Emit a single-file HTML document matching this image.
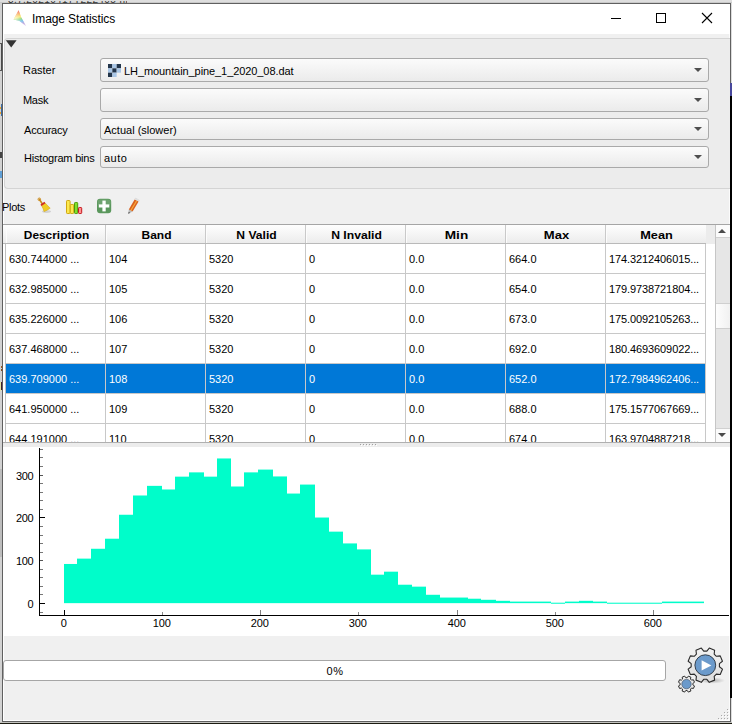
<!DOCTYPE html>
<html><head><meta charset="utf-8"><title>Image Statistics</title>
<style>
html,body{margin:0;padding:0}
body{width:732px;height:724px;overflow:hidden;position:relative;background:#d9d9d9;font-family:"Liberation Sans",Arial,sans-serif;font-size:11px;color:#000}
div,span,svg{position:absolute;box-sizing:border-box}
.a{position:absolute}
#win{left:2px;top:3px;width:729px;height:719px;border:1px solid #606060;background:#f0f0f0}
#tb{left:3px;top:4px;width:727px;height:30px;background:#fff}
#ttl{left:32px;top:12px;font-size:12px;line-height:14px;letter-spacing:-0.1px;white-space:nowrap}
#gb{left:4px;top:38px;width:726px;height:151px;border:1px solid #d4d4d4;border-right:none;border-radius:4px 0 0 4px;background:#ececec}
.lbl{left:23px;line-height:14px;white-space:nowrap;letter-spacing:-0.3px}
.cb{left:100px;width:609px;border:1px solid #a9a9a9;border-radius:3px;background:linear-gradient(#fbfbfb,#ebebeb)}
.cb span{left:3px;white-space:nowrap;line-height:14px;letter-spacing:-0.12px}
.arr{width:0;height:0;border-left:4px solid transparent;border-right:4px solid transparent;border-top:4px solid #4e4e4e}
#tbl{left:3px;top:224px;width:727px;height:219px;border-top:1px solid #a5a5a5;border-bottom:1px solid #b0b0b0;background:#fff;overflow:hidden}
#hdr{left:0;top:0;width:703px;height:19px;background:linear-gradient(#fefefe,#ececec);border-bottom:1px solid #b9b9b9}
#hdr2{left:703px;top:0;width:10px;height:19px;background:#ececec}
.th{top:0;width:100px;height:18px;border-right:1px solid #c9c9c9;box-shadow:inset 1px 0 0 #fcfcfc;margin-left:3px;font-weight:bold;text-align:center}
.th span{left:1px;width:100%;top:3px;line-height:14px;letter-spacing:0;position:absolute;transform:scaleX(1.12);transform-origin:50% 50%}
.tr{left:3px;width:700px;height:30px;border-bottom:1px solid #c8c8c8}
.tr.sel{background:#0078d7;color:#fff}
.td{top:0;width:100px;height:30px;border-right:1px solid #c8c8c8;overflow:hidden}
.td span{left:3px;top:8px;line-height:14px;white-space:nowrap;letter-spacing:0}
#vl{left:2px;top:19px;width:1px;height:200px;background:#c0c0c0}
#sb{left:712px;top:0;width:15px;height:218px;background:#e6e6e6;border-left:1px solid #c6c6c6}
.plot{left:3px;top:447px}
.pl{font-family:"Liberation Sans",Arial,sans-serif;font-size:11px;fill:#000;letter-spacing:-0.35px}
#pb{left:3px;top:660px;width:663px;height:21px;border:1px solid #a6a6a6;border-radius:3px;background:#fff;text-align:center;line-height:21px;letter-spacing:0.5px;text-indent:1px}
</style></head><body>
<!-- background slivers -->
<div style="left:0;top:0;width:732px;height:3px;background:#dedede"></div>
<div style="left:0;top:3px;width:2px;height:719px;background:#d2d2d2"></div>
<div style="left:731px;top:0;width:1px;height:722px;background:#dcdcdc"></div>
<div style="left:0;top:722px;width:732px;height:1px;background:#c4c4c0"></div>
<div style="left:0;top:723px;width:732px;height:1px;background:#1c1c12"></div>

<div style="left:0;top:2px;width:732px;height:1px;background:#c9c9c9"></div>
<div style="left:8px;top:1px;width:119px;height:2px;overflow:hidden"><div style="left:0;top:-7px;font-size:10px;line-height:11px;white-space:nowrap;color:#333;letter-spacing:0.4px">3.7.20210417T222405 nightly</div></div>
<div id="win"></div>
<div id="tb"></div>
<div style="left:3px;top:34px;width:1px;height:687px;background:#fff"></div>
<div style="left:729px;top:34px;width:1px;height:687px;background:#fbfbfb"></div>
<div style="left:3px;top:720px;width:727px;height:1px;background:#fff"></div>
<svg style="left:12px;top:9px" width="18" height="19" viewBox="0 0 18 19">
<defs><linearGradient id="rg" x1="0.55" y1="0" x2="0.75" y2="1">
<stop offset="0" stop-color="#ee2a24"/><stop offset="0.22" stop-color="#f79a1c"/><stop offset="0.38" stop-color="#f6e23a"/><stop offset="0.52" stop-color="#5dc64a"/><stop offset="0.66" stop-color="#3aa6e8"/><stop offset="0.82" stop-color="#a986d2"/><stop offset="1" stop-color="#d9c8ee"/></linearGradient>
<linearGradient id="fd" x1="1" y1="0.3" x2="0" y2="0.7"><stop offset="0" stop-color="#fff" stop-opacity="0"/><stop offset="1" stop-color="#fff" stop-opacity="0.85"/></linearGradient></defs>
<path d="M6.6,1.2 L9.3,8.5 L14.2,17.3 L7.2,11.8 L1.6,10.6 Z" fill="url(#rg)"/>
<path d="M6.6,1.2 L9.3,8.5 L14.2,17.3 L7.2,11.8 L1.6,10.6 Z" fill="url(#fd)"/>
</svg>
<div id="ttl">Image Statistics</div>
<!-- window controls -->
<div style="left:611px;top:18px;width:10px;height:1px;background:#000"></div>
<div style="left:656px;top:13px;width:10px;height:10px;border:1px solid #000"></div>
<svg style="left:701px;top:12px" width="12" height="12" viewBox="0 0 12 12"><path d="M1,1 L11,11 M11,1 L1,11" stroke="#000" stroke-width="1.1" fill="none"/></svg>

<div style="left:730px;top:83px;width:2px;height:13px;background:#47479c"></div>
<div style="left:730px;top:96px;width:2px;height:602px;background:#000"></div>
<div style="left:0;top:469px;width:2px;height:88px;background:#bdbdbd"></div>
<div style="left:1px;top:43px;width:1px;height:28px;background:#4a4a4a"></div>
<div style="left:0;top:43px;width:2px;height:1px;background:#555"></div>
<div style="left:0;top:70px;width:2px;height:1px;background:#555"></div>
<div style="left:0;top:107px;width:2px;height:2px;background:#eea22a"></div>
<div style="left:0;top:112px;width:2px;height:2px;background:#eea22a"></div>
<div style="left:1px;top:104px;width:1px;height:12px;background:#3d6da3"></div>
<div style="left:0;top:152px;width:2px;height:6px;background:#444"></div>
<div style="left:0;top:171px;width:2px;height:7px;background:#5f9fd6"></div>
<div style="left:1px;top:366px;width:1px;height:2px;background:#a05a20"></div><div style="left:1px;top:369px;width:1px;height:2px;background:#8a4a1a"></div><div style="left:0;top:382px;width:1px;height:9px;background:#e6e6a0"></div>
<div style="left:1px;top:382px;width:1px;height:8px;background:#402030"></div>
<div id="gb"></div>
<svg style="left:5px;top:39px" width="13" height="10" viewBox="0 0 13 10"><path d="M0.8,1.2 L11.6,1.2 L6.2,8.6 Z" fill="#333"/></svg>

<div class="lbl" style="top:63px;letter-spacing:0">Raster</div>
<div class="lbl" style="top:93px">Mask</div>
<div class="lbl" style="top:123px;left:24px;letter-spacing:-0.2px">Accuracy</div>
<div class="lbl" style="top:151px;left:24px;letter-spacing:-0.2px">Histogram bins</div>

<div class="cb" style="top:58px;height:24px">
 <svg style="left:7px;top:5px" width="13" height="13" viewBox="0 0 13 13">
 <rect x="0" y="0" width="4.33" height="4.33" fill="#23354b"/><rect x="4.33" y="0" width="4.34" height="4.33" fill="#a9c6e6"/><rect x="8.67" y="0" width="4.33" height="4.33" fill="#23354b"/>
 <rect x="0" y="4.33" width="4.33" height="4.34" fill="#a9c6e6"/><rect x="4.33" y="4.33" width="4.34" height="4.34" fill="#23354b"/><rect x="8.67" y="4.33" width="4.33" height="4.34" fill="#a9c6e6"/>
 <rect x="0" y="8.67" width="4.33" height="4.33" fill="#23354b"/><rect x="4.33" y="8.67" width="4.34" height="4.33" fill="#a9c6e6"/>
 </svg>
 <span style="left:23px;top:5px;letter-spacing:-0.08px">LH_mountain_pine_1_2020_08.dat</span>
 <div class="arr" style="left:593px;top:9px"></div>
</div>
<div class="cb" style="top:88px;height:24px"><div class="arr" style="left:593px;top:9px"></div></div>
<div class="cb" style="top:118px;height:22px"><span style="top:4px;letter-spacing:0">Actual (slower)</span><div class="arr" style="left:593px;top:8px"></div></div>
<div class="cb" style="top:146px;height:22px"><span style="top:4px;letter-spacing:0.5px">auto</span><div class="arr" style="left:593px;top:8px"></div></div>

<!-- toolbar -->
<div class="a" style="left:2px;top:200px;line-height:14px;letter-spacing:-0.3px">Plots</div>
<!-- broom -->
<svg style="left:36px;top:196px" width="18" height="18" viewBox="0 0 18 18">
<ellipse cx="10.5" cy="15.6" rx="4.5" ry="1.3" fill="#000" opacity="0.13"/>
<path d="M3.4,3.4 L6.6,8.2" stroke="#c98a1c" stroke-width="1.7" stroke-linecap="round" fill="none"/>
<circle cx="3.3" cy="3.3" r="1.3" fill="none" stroke="#c98a1c" stroke-width="0.9"/>
<path d="M5.2,9.2 L8.8,6.7 L14.2,12.2 C12.6,13.2 10.8,14.6 8.0,15.6 C7.6,13.6 6.6,11.2 5.2,9.2 Z" fill="#f0cc24" stroke="#d3a91b" stroke-width="0.6"/>
<path d="M5.0,9.3 L8.9,6.5" stroke="#cf2a27" stroke-width="1.7" fill="none"/>
</svg>
<!-- bars -->
<svg style="left:65px;top:199px" width="19" height="16" viewBox="65 199 19 16">
<rect x="66.5" y="200.5" width="3.6" height="13" rx="0.8" fill="#fce94f" stroke="#d0a711" stroke-width="1"/>
<rect x="70.3" y="204.5" width="3.4" height="9" rx="0.8" fill="#fce94f" stroke="#d0a711" stroke-width="1"/>
<rect x="74.5" y="202.5" width="3.2" height="11" rx="0.8" fill="#7fe02d" stroke="#4e9a06" stroke-width="1"/>
<rect x="78.5" y="207.5" width="3.2" height="6" rx="0.8" fill="#ff9090" stroke="#c4161c" stroke-width="1"/>
</svg>
<!-- plus -->
<svg style="left:96px;top:198px" width="16" height="16" viewBox="96 198 16 16">
<rect x="97" y="198.8" width="14.2" height="14.4" rx="3" fill="#5a975c"/>
<rect x="97.6" y="199.4" width="13" height="6" rx="2.5" fill="#fff" opacity="0.12"/>
<rect x="98.8" y="204.4" width="10.5" height="3.1" fill="#fff"/>
<rect x="102.4" y="200.6" width="3.3" height="10.8" fill="#fff"/>
</svg>
<!-- pencil -->
<svg style="left:126px;top:197px" width="16" height="18" viewBox="126 197 16 18">
<path d="M134.6,199.4 L138.6,201.6 L132.6,211.6 L128.8,209.4 Z" fill="#d9611e"/>
<path d="M136.2,200.4 L137.2,200.9 L131.2,210.9 L130.2,210.3 Z" fill="#f8a83c"/>
<path d="M134.9,199 L135.6,198 L139.4,200.2 L138.8,201.4 Z" fill="#e4e4e4" stroke="#cfcfcf" stroke-width="0.4"/>
<path d="M128.8,209.4 L132.6,211.6 L128.4,213.8 Z" fill="#b9b9b9"/>
<path d="M128.6,211.8 L130.1,212.7 L128.3,213.9 Z" fill="#555"/>
</svg>

<!-- table -->
<div id="tbl">
 <div id="hdr"></div><div id="hdr2"></div>
 <div class="th" style="left:0px"><span style="transform:scaleX(1.08)">Description</span></div><div class="th" style="left:100px"><span style="transform:scaleX(1.09)">Band</span></div><div class="th" style="left:200px"><span style="transform:scaleX(1.1)">N Valid</span></div><div class="th" style="left:300px"><span style="transform:scaleX(1.105)">N Invalid</span></div><div class="th" style="left:400px"><span style="transform:scaleX(1.24)">Min</span></div><div class="th" style="left:500px"><span style="transform:scaleX(1.185)">Max</span></div><div class="th" style="left:600px;border-right-color:transparent"><span style="transform:scaleX(1.16)">Mean</span></div>
 <div class="tr" style="top:19px"><div class="td" style="left:0px"><span>630.744000 ...</span></div><div class="td" style="left:100px"><span>104</span></div><div class="td" style="left:200px"><span>5320</span></div><div class="td" style="left:300px"><span>0</span></div><div class="td" style="left:400px"><span>0.0</span></div><div class="td" style="left:500px"><span>664.0</span></div><div class="td" style="left:600px"><span style="letter-spacing:-0.1px">174.3212406015...</span></div></div><div class="tr" style="top:49px"><div class="td" style="left:0px"><span>632.985000 ...</span></div><div class="td" style="left:100px"><span>105</span></div><div class="td" style="left:200px"><span>5320</span></div><div class="td" style="left:300px"><span>0</span></div><div class="td" style="left:400px"><span>0.0</span></div><div class="td" style="left:500px"><span>654.0</span></div><div class="td" style="left:600px"><span style="letter-spacing:-0.1px">179.9738721804...</span></div></div><div class="tr" style="top:79px"><div class="td" style="left:0px"><span>635.226000 ...</span></div><div class="td" style="left:100px"><span>106</span></div><div class="td" style="left:200px"><span>5320</span></div><div class="td" style="left:300px"><span>0</span></div><div class="td" style="left:400px"><span>0.0</span></div><div class="td" style="left:500px"><span>673.0</span></div><div class="td" style="left:600px"><span style="letter-spacing:-0.1px">175.0092105263...</span></div></div><div class="tr" style="top:109px"><div class="td" style="left:0px"><span>637.468000 ...</span></div><div class="td" style="left:100px"><span>107</span></div><div class="td" style="left:200px"><span>5320</span></div><div class="td" style="left:300px"><span>0</span></div><div class="td" style="left:400px"><span>0.0</span></div><div class="td" style="left:500px"><span>692.0</span></div><div class="td" style="left:600px"><span style="letter-spacing:-0.1px">180.4693609022...</span></div></div><div class="tr sel" style="top:139px"><div class="td" style="left:0px"><span>639.709000 ...</span></div><div class="td" style="left:100px"><span>108</span></div><div class="td" style="left:200px"><span>5320</span></div><div class="td" style="left:300px"><span>0</span></div><div class="td" style="left:400px"><span>0.0</span></div><div class="td" style="left:500px"><span>652.0</span></div><div class="td" style="left:600px"><span style="letter-spacing:-0.1px">172.7984962406...</span></div></div><div class="tr" style="top:169px"><div class="td" style="left:0px"><span>641.950000 ...</span></div><div class="td" style="left:100px"><span>109</span></div><div class="td" style="left:200px"><span>5320</span></div><div class="td" style="left:300px"><span>0</span></div><div class="td" style="left:400px"><span>0.0</span></div><div class="td" style="left:500px"><span>688.0</span></div><div class="td" style="left:600px"><span style="letter-spacing:-0.1px">175.1577067669...</span></div></div><div class="tr" style="top:199px"><div class="td" style="left:0px"><span>644.191000 ...</span></div><div class="td" style="left:100px"><span>110</span></div><div class="td" style="left:200px"><span>5320</span></div><div class="td" style="left:300px"><span>0</span></div><div class="td" style="left:400px"><span>0.0</span></div><div class="td" style="left:500px"><span>674.0</span></div><div class="td" style="left:600px"><span style="letter-spacing:-0.1px">163.9704887218...</span></div></div>
 <div id="vl"></div>
 <div id="sb">
  <div style="left:0;top:0;width:14px;height:13px;background:#fbfbfb;border-bottom:1px solid #d0d0d0"></div>
  <div style="left:2px;top:4px;width:0;height:0;border-left:4px solid transparent;border-right:4px solid transparent;border-bottom:4px solid #4a4a4a"></div>
  <div style="left:0;top:78px;width:14px;height:26px;background:linear-gradient(90deg,#fdfdfd,#f1f1f1);border-top:1px solid #cfcfcf;border-bottom:1px solid #cfcfcf"></div>
  <div style="left:0;top:203px;width:14px;height:15px;background:#fbfbfb;border-top:1px solid #d0d0d0"></div>
  <div style="left:2px;top:208px;width:0;height:0;border-left:4px solid transparent;border-right:4px solid transparent;border-top:4px solid #4a4a4a"></div>
 </div>
</div>
<div style="left:3px;top:443px;width:727px;height:4px;background:#ececec"></div>
<div style="left:3px;top:447px;width:727px;height:189px;background:#fff"></div>
<svg style="left:358px;top:443px" width="22" height="4" viewBox="358 443 22 4" shape-rendering="crispEdges"><rect x="360" y="444" width="1" height="1" fill="#a0a0a0"/><rect x="361" y="445" width="1" height="1" fill="#fff"/><rect x="363" y="444" width="1" height="1" fill="#a0a0a0"/><rect x="364" y="445" width="1" height="1" fill="#fff"/><rect x="366" y="444" width="1" height="1" fill="#a0a0a0"/><rect x="367" y="445" width="1" height="1" fill="#fff"/><rect x="369" y="444" width="1" height="1" fill="#a0a0a0"/><rect x="370" y="445" width="1" height="1" fill="#fff"/><rect x="372" y="444" width="1" height="1" fill="#a0a0a0"/><rect x="373" y="445" width="1" height="1" fill="#fff"/><rect x="375" y="444" width="1" height="1" fill="#a0a0a0"/><rect x="376" y="445" width="1" height="1" fill="#fff"/></svg>
<svg class="plot" width="726" height="189" viewBox="3 447 726 189">
<g fill="#00fdca"><rect x="64" y="563.97" width="13" height="39.18"/><rect x="77" y="558.62" width="14" height="44.53"/><rect x="91" y="548.77" width="14" height="54.38"/><rect x="105" y="538.71" width="14" height="64.44"/><rect x="119" y="514.75" width="14" height="88.40"/><rect x="133" y="495.49" width="14" height="107.66"/><rect x="147" y="485.86" width="15" height="117.29"/><rect x="162" y="489.49" width="13" height="113.66"/><rect x="175" y="476.65" width="14" height="126.50"/><rect x="189" y="472.37" width="15" height="130.78"/><rect x="204" y="476.65" width="13" height="126.50"/><rect x="217" y="458.46" width="14" height="144.69"/><rect x="231" y="486.50" width="13" height="116.65"/><rect x="244" y="472.37" width="14" height="130.78"/><rect x="258" y="469.59" width="15" height="133.56"/><rect x="273" y="476.44" width="14" height="126.71"/><rect x="287" y="493.56" width="13" height="109.59"/><rect x="300" y="484.57" width="15" height="118.58"/><rect x="315" y="517.53" width="14" height="85.62"/><rect x="329" y="531.65" width="14" height="71.50"/><rect x="343" y="543.42" width="14" height="59.73"/><rect x="357" y="549.41" width="14" height="53.74"/><rect x="371" y="574.67" width="13" height="28.48"/><rect x="384" y="571.67" width="14" height="31.48"/><rect x="398" y="584.72" width="14" height="18.43"/><rect x="412" y="586.65" width="14" height="16.50"/><rect x="426" y="594.78" width="14" height="8.37"/><rect x="440" y="597.56" width="14" height="5.59"/><rect x="454" y="597.56" width="14" height="5.59"/><rect x="468" y="598.72" width="13" height="4.43"/><rect x="481" y="599.79" width="15" height="3.36"/><rect x="496" y="600.82" width="14" height="2.33"/><rect x="510" y="601.59" width="14" height="1.56"/><rect x="524" y="601.59" width="14" height="1.56"/><rect x="538" y="601.59" width="13" height="1.56"/><rect x="551" y="602.70" width="14" height="1.05"/><rect x="565" y="601.59" width="14" height="1.56"/><rect x="579" y="600.82" width="14" height="2.33"/><rect x="593" y="601.59" width="14" height="1.56"/><rect x="607" y="602.70" width="14" height="1.05"/><rect x="621" y="602.70" width="13" height="1.05"/><rect x="634" y="602.70" width="14" height="1.05"/><rect x="648" y="602.70" width="14" height="1.05"/><rect x="662" y="601.59" width="14" height="1.56"/><rect x="676" y="601.59" width="14" height="1.56"/><rect x="690" y="601.59" width="14" height="1.56"/></g>
<rect x="39" y="448" width="1" height="168" fill="#000"/>
<rect x="39" y="615" width="691" height="1" fill="#000"/>
<rect x="40" y="612" width="3" height="1" fill="#777"/><rect x="40" y="603" width="5" height="1" fill="#000"/><text x="33.3" y="607.9" text-anchor="end" class="pl">0</text><rect x="40" y="594" width="3" height="1" fill="#777"/><rect x="40" y="586" width="3" height="1" fill="#777"/><rect x="40" y="577" width="3" height="1" fill="#777"/><rect x="40" y="569" width="3" height="1" fill="#777"/><rect x="40" y="560" width="3" height="1" fill="#555"/><text x="33.3" y="564.9" text-anchor="end" class="pl">100</text><rect x="40" y="552" width="3" height="1" fill="#777"/><rect x="40" y="543" width="3" height="1" fill="#777"/><rect x="40" y="535" width="3" height="1" fill="#777"/><rect x="40" y="526" width="3" height="1" fill="#777"/><rect x="40" y="517" width="5" height="1" fill="#000"/><text x="33.3" y="521.9" text-anchor="end" class="pl">200</text><rect x="40" y="509" width="3" height="1" fill="#777"/><rect x="40" y="500" width="3" height="1" fill="#777"/><rect x="40" y="492" width="3" height="1" fill="#777"/><rect x="40" y="483" width="3" height="1" fill="#777"/><rect x="40" y="475" width="3" height="1" fill="#555"/><text x="33.3" y="479.9" text-anchor="end" class="pl">300</text><rect x="40" y="466" width="3" height="1" fill="#777"/><rect x="40" y="457" width="3" height="1" fill="#777"/><rect x="40" y="449" width="3" height="1" fill="#777"/>
<rect x="64" y="610" width="1" height="5" fill="#000"/><text x="63.7" y="627.2" text-anchor="middle" class="pl" style="letter-spacing:-0.15px">0</text><rect x="162" y="612" width="1" height="3" fill="#8a8a8a"/><text x="161.7" y="627.2" text-anchor="middle" class="pl" style="letter-spacing:-0.15px">100</text><rect x="260" y="610" width="1" height="5" fill="#808080"/><text x="259.7" y="627.2" text-anchor="middle" class="pl" style="letter-spacing:-0.15px">200</text><rect x="358" y="612" width="1" height="3" fill="#8a8a8a"/><text x="357.7" y="627.2" text-anchor="middle" class="pl" style="letter-spacing:-0.15px">300</text><rect x="457" y="610" width="1" height="5" fill="#808080"/><text x="456.7" y="627.2" text-anchor="middle" class="pl" style="letter-spacing:-0.15px">400</text><rect x="555" y="612" width="1" height="3" fill="#8a8a8a"/><text x="554.7" y="627.2" text-anchor="middle" class="pl" style="letter-spacing:-0.15px">500</text><rect x="653" y="610" width="1" height="5" fill="#808080"/><text x="652.7" y="627.2" text-anchor="middle" class="pl" style="letter-spacing:-0.15px">600</text>
</svg>

<div id="pb">0%</div>
<!-- gears -->
<svg style="left:670px;top:644px" width="58" height="54" viewBox="670 644 58 54">
<defs><linearGradient id="gg" x1="0" y1="0" x2="0" y2="1"><stop offset="0" stop-color="#f2f2f2"/><stop offset="1" stop-color="#dcdcdc"/></linearGradient><radialGradient id="sh" cx="0.5" cy="0.5" r="0.5"><stop offset="0" stop-color="#000" stop-opacity="0.28"/><stop offset="1" stop-color="#000" stop-opacity="0"/></radialGradient></defs>
<ellipse cx="712" cy="680.5" rx="13" ry="3.2" fill="url(#sh)"/>

<path d="M692.86,684.80 L694.49,685.95 L693.46,688.44 L691.49,688.10 L690.50,689.09 L690.84,691.06 L688.35,692.09 L687.20,690.46 L685.80,690.46 L684.65,692.09 L682.16,691.06 L682.50,689.09 L681.51,688.10 L679.54,688.44 L678.51,685.95 L680.14,684.80 L680.14,683.40 L678.51,682.25 L679.54,679.76 L681.51,680.10 L682.50,679.11 L682.16,677.14 L684.65,676.11 L685.80,677.74 L687.20,677.74 L688.35,676.11 L690.84,677.14 L690.50,679.11 L691.49,680.10 L693.46,679.76 L694.49,682.25 L692.86,683.40 Z" fill="#e9e9e9" stroke="#2b2b2b" stroke-width="1" stroke-linejoin="round"/><circle cx="686.5" cy="684.1" r="4.7" fill="#6b9acb" stroke="#3a4a5e" stroke-width="0.6"/><path d="M719.41,666.76 L722.45,669.17 L720.23,674.51 L716.38,674.08 L714.18,676.28 L714.61,680.13 L709.27,682.35 L706.86,679.31 L703.74,679.31 L701.33,682.35 L695.99,680.13 L696.42,676.28 L694.22,674.08 L690.37,674.51 L688.15,669.17 L691.19,666.76 L691.19,663.64 L688.15,661.23 L690.37,655.89 L694.22,656.32 L696.42,654.12 L695.99,650.27 L701.33,648.05 L703.74,651.09 L706.86,651.09 L709.27,648.05 L714.61,650.27 L714.18,654.12 L716.38,656.32 L720.23,655.89 L722.45,661.23 L719.41,663.64 Z" fill="url(#gg)" stroke="#2b2b2b" stroke-width="1.1" stroke-linejoin="round"/><circle cx="705.3" cy="665.2" r="10.4" fill="#6b9acb" stroke="#26303c" stroke-width="0.9"/><path d="M701.6,660.2 L711.4,665.4 L701.6,670.4 Z" fill="#fff"/>
</svg>
<!-- size grip -->
<svg style="left:716px;top:707px" width="14" height="14" viewBox="716 707 14 14" shape-rendering="crispEdges">
<g fill="#a9a9a9"><rect x="727" y="709" width="1" height="1"/><rect x="724" y="712" width="1" height="1"/><rect x="727" y="712" width="1" height="1"/><rect x="721" y="715" width="1" height="1"/><rect x="724" y="715" width="1" height="1"/><rect x="727" y="715" width="1" height="1"/><rect x="718" y="718" width="1" height="1"/><rect x="721" y="718" width="1" height="1"/><rect x="724" y="718" width="1" height="1"/><rect x="727" y="718" width="1" height="1"/></g><g fill="#fff"><rect x="728" y="710" width="1" height="1"/><rect x="725" y="713" width="1" height="1"/><rect x="728" y="713" width="1" height="1"/><rect x="722" y="716" width="1" height="1"/><rect x="725" y="716" width="1" height="1"/><rect x="728" y="716" width="1" height="1"/><rect x="719" y="719" width="1" height="1"/><rect x="722" y="719" width="1" height="1"/><rect x="725" y="719" width="1" height="1"/><rect x="728" y="719" width="1" height="1"/></g>
</svg>
</body></html>
